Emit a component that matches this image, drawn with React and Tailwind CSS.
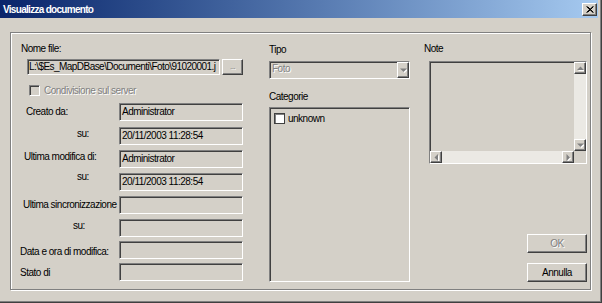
const sunken =
  "border border-t-[#808080] border-l-[#808080] border-r-white border-b-white shadow-[inset_1px_1px_0_#404040,inset_-1px_-1px_0_#d4d0c8]";
const raised =
  "border border-t-white border-l-white border-r-[#404040] border-b-[#404040] shadow-[inset_-1px_-1px_0_#808080,inset_1px_1px_0_#d4d0c8]";
const disabledText = "text-[#808080] [text-shadow:1px_1px_0_#fff]";

const Field = ({ label, labelClass, value }) => (
  <div className="flex items-start h-[18px]">
    <div className={`w-[99px] h-[13px] leading-[13px] whitespace-nowrap ${labelClass}`}>{label}</div>
    <div className={`w-[124px] h-[18px] ${sunken} pl-[2px] leading-[15px] whitespace-nowrap overflow-hidden`}>
      {value}
    </div>
  </div>
);

const Arrow = ({ dir, disabled = true }) => {
  const pts = {
    up: "0,4 3.5,0.5 7,4",
    down: "0,0.5 3.5,4 7,0.5",
    left: "4,0 0.5,3.5 4,7",
    right: "0.5,0 4,3.5 0.5,7",
  }[dir];
  const vertical = dir === "up" || dir === "down";
  return (
    <svg width={vertical ? 7 : 5} height={vertical ? 5 : 7} viewBox={vertical ? "0 0 7 5" : "0 0 5 7"}>
      {disabled && <polygon points={pts} fill="#fff" transform="translate(1,1)" />}
      <polygon points={pts} fill={disabled ? "#808080" : "#000"} />
    </svg>
  );
};

const ScrollBtn = ({ dir }) => (
  <div className={`w-[12px] h-[12px] bg-[#d4d0c8] flex items-center justify-center ${raised}`}>
    <Arrow dir={dir} />
  </div>
);

export default function App() {
  return (
    <div className="w-[602px] h-[303px] bg-[#d4d0c8] flex flex-col pr-[4px] pb-[4px] shadow-[inset_-1px_-1px_0_#404040,inset_-2px_-2px_0_#808080] overflow-hidden font-['Liberation_Sans',Arial,sans-serif] text-[10px] tracking-[-0.5px] text-black">
      {/* title bar */}
      <div className="h-[18px] flex items-center bg-gradient-to-r from-[#0a246a] to-[#a6caf0] pl-[3px] pr-[1px]">
        <span className="text-white font-bold text-[10px] tracking-[-0.7px] leading-[13px]">Visualizza documento</span>
        <div className={`ml-auto w-[15px] h-[13px] bg-[#d4d0c8] flex items-center justify-center ${raised}`}>
          <svg width="8" height="7" viewBox="0 0 8 7">
            <path d="M0.5 0.5 L7 6.5 M1.5 0.5 L7.5 6.5 M7 0.5 L0.5 6.5 M7.5 0.5 L1.5 6.5" stroke="#000" strokeWidth="1" />
          </svg>
        </div>
      </div>

      {/* group box */}
      <div className="ml-[10px] mt-[14px] w-[581px] h-[258px] border border-[#808080] shadow-[inset_1px_1px_0_#fff,1px_1px_0_#fff] flex">
        {/* left column */}
        <div className="w-[232px] pl-[9px] flex flex-col">
          <div className="mt-[9px] ml-[1px] h-[13px] leading-[13px]">Nome file:</div>
          <div className="mt-[4px] ml-[7px] flex">
            <div className={`w-[193px] h-[16px] ${sunken} pl-[1px] leading-[13px] tracking-[-0.55px] whitespace-nowrap overflow-hidden`}>
              {"L:\\$Es_MapDBase\\Documenti\\Foto\\91020001.j"}
            </div>
            <div className={`ml-[2px] w-[21px] h-[16px] ${raised} flex items-center justify-center`}>
              <span className={`text-[8px] leading-[8px] ${disabledText}`}>...</span>
            </div>
          </div>
          <div className="mt-[9px] ml-[9px] flex items-center h-[12px]">
            <div className={`w-[11px] h-[11px] ${sunken}`} />
            <span className={`ml-[4px] leading-[13px] ${disabledText}`}>Condivisione sul server</span>
          </div>
          <div className="mt-[7px]">
            <Field label="Creato da:" labelClass="pl-[6px] mt-[2px]" value="Administrator" />
          </div>
          <div className="mt-[6px]">
            <Field label="su:" labelClass="pl-[57px] mt-[0px]" value="20/11/2003 11:28:54" />
          </div>
          <div className="mt-[5px]">
            <Field label="Ultima modifica di:" labelClass="pl-[4px] mt-[0px]" value="Administrator" />
          </div>
          <div className="mt-[5px]">
            <Field label="su:" labelClass="pl-[57px] -mt-[3px]" value="20/11/2003 11:28:54" />
          </div>
          <div className="mt-[5px]">
            <Field label="Ultima sincronizzazione" labelClass="pl-[3px] mt-[2px]" value="" />
          </div>
          <div className="mt-[5px]">
            <Field label="su:" labelClass="pl-[53px] mt-[0px]" value="" />
          </div>
          <div className="mt-[4px]">
            <Field label="Data e ora di modifica:" labelClass="mt-[4px]" value="" />
          </div>
          <div className="mt-[4px]">
            <Field label="Stato di" labelClass="mt-[3px]" value="" />
          </div>
        </div>

        {/* middle column */}
        <div className="ml-[26px] w-[141px] flex flex-col">
          <div className="mt-[10px] h-[13px] leading-[13px]">Tipo</div>
          <div className={`mt-[5px] w-[141px] h-[18px] ${sunken} flex items-stretch`}>
            <span className={`flex-1 pl-[2px] leading-[14px] ${disabledText}`}>Foto</span>
            <div className={`w-[12px] bg-[#d4d0c8] flex items-center justify-center ${raised}`}>
              <Arrow dir="down" />
            </div>
          </div>
          <div className="mt-[11px] h-[13px] leading-[13px]">Categorie</div>
          <div className={`mt-[4px] w-[141px] h-[175px] ${sunken} pt-[4px] pl-[4px]`}>
            <div className="flex items-center h-[12px]">
              <div className="w-[11px] h-[11px] bg-white border border-[#404040] shadow-[inset_1px_1px_0_#808080]" />
              <span className="ml-[3px] leading-[13px]">unknown</span>
            </div>
          </div>
        </div>

        {/* right column */}
        <div className="ml-[14px] w-[163px] flex flex-col">
          <div className="mt-[9px] h-[13px] leading-[13px]">Note</div>
          <div className={`mt-[6px] ml-[5px] w-[158px] h-[103px] ${sunken} flex`}>
            <div className="flex-1 flex flex-col">
              <div className="flex-1" />
              <div className="h-[12px] flex bg-[#ebe9e4]">
                <ScrollBtn dir="left" />
                <div className="flex-1" />
                <ScrollBtn dir="right" />
              </div>
            </div>
            <div className="w-[12px] flex flex-col">
              <ScrollBtn dir="up" />
              <div className="flex-1 bg-[#ebe9e4]" />
              <ScrollBtn dir="down" />
              <div className="h-[12px] bg-[#d4d0c8]" />
            </div>
          </div>
          <div className={`mt-[70px] ml-[103px] w-[60px] h-[19px] ${raised} flex items-center justify-center`}>
            <span className={disabledText}>OK</span>
          </div>
          <div className={`mt-[10px] ml-[103px] w-[60px] h-[19px] ${raised} flex items-center justify-center`}>
            <span>Annulla</span>
          </div>
        </div>
      </div>
    </div>
  );
}
